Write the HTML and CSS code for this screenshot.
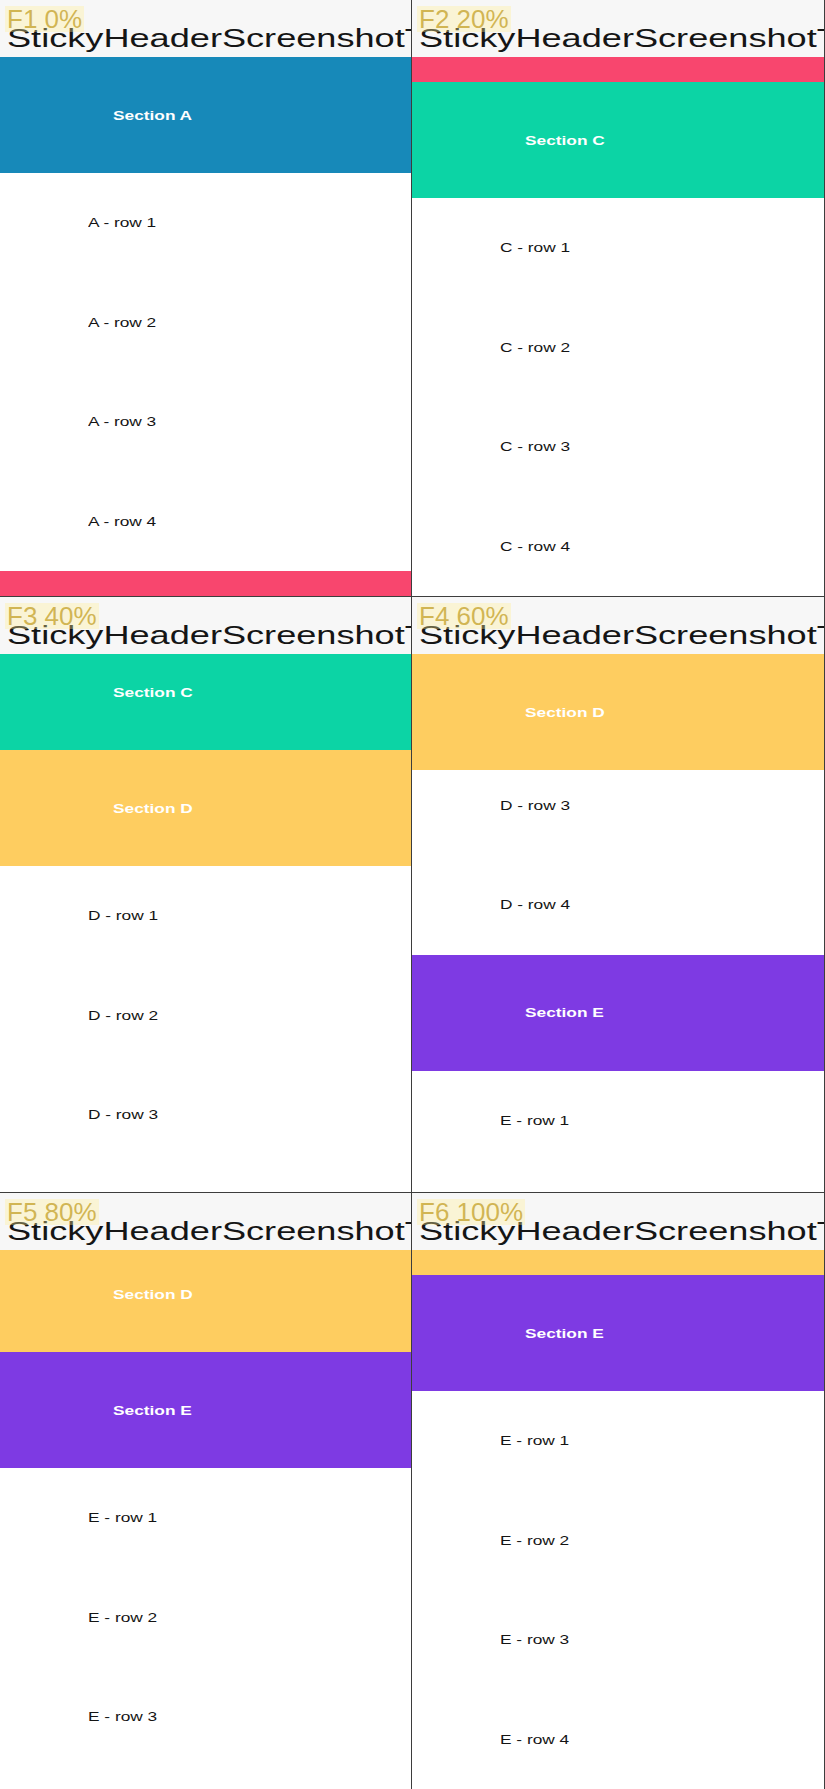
FILE: index.html
```html
<!DOCTYPE html>
<html lang="en">

<head>
  <meta charset="UTF-8">
  <meta name="viewport" content="width=device-width, initial-scale=1.0">
  <title>Sticky Header Screenshot Test</title>
  <link rel="stylesheet" href="styles.css">
</head>

<body>
  <main class="Board">

    <section class="Shot">
      <header class="Shot-bar">
        <span class="Shot-tag">F1 0%</span>
        <h1 class="Shot-title">StickyHeaderScreenshotTest</h1>
      </header>
      <div class="Shot-view">
        <div class="Head Head--a"><span>Section A</span></div>
        <div class="Row"><span>A - row 1</span></div>
        <div class="Row"><span>A - row 2</span></div>
        <div class="Row"><span>A - row 3</span></div>
        <div class="Row"><span>A - row 4</span></div>
        <div class="Head Head--b"><span>Section B</span></div>
      </div>
    </section>

    <section class="Shot">
      <header class="Shot-bar">
        <span class="Shot-tag">F2 20%</span>
        <h1 class="Shot-title">StickyHeaderScreenshotTest</h1>
      </header>
      <div class="Shot-view">
        <div class="Head Head--b is-peek"><span>Section B</span></div>
        <div class="Head Head--c"><span>Section C</span></div>
        <div class="Row"><span>C - row 1</span></div>
        <div class="Row"><span>C - row 2</span></div>
        <div class="Row"><span>C - row 3</span></div>
        <div class="Row"><span>C - row 4</span></div>
      </div>
    </section>

    <section class="Shot">
      <header class="Shot-bar">
        <span class="Shot-tag">F3 40%</span>
        <h1 class="Shot-title">StickyHeaderScreenshotTest</h1>
      </header>
      <div class="Shot-view">
        <div class="Head Head--c is-lifted"><span>Section C</span></div>
        <div class="Head Head--d"><span>Section D</span></div>
        <div class="Row"><span>D - row 1</span></div>
        <div class="Row"><span>D - row 2</span></div>
        <div class="Row"><span>D - row 3</span></div>
        <div class="Row"><span>D - row 4</span></div>
      </div>
    </section>

    <section class="Shot">
      <header class="Shot-bar">
        <span class="Shot-tag">F4 60%</span>
        <h1 class="Shot-title">StickyHeaderScreenshotTest</h1>
      </header>
      <div class="Shot-view">
        <div class="Head Head--d"><span>Section D</span></div>
        <div class="Row is-under"><span>D - row 3</span></div>
        <div class="Row"><span>D - row 4</span></div>
        <div class="Head Head--e"><span>Section E</span></div>
        <div class="Row"><span>E - row 1</span></div>
        <div class="Row"><span>E - row 2</span></div>
      </div>
    </section>

    <section class="Shot">
      <header class="Shot-bar">
        <span class="Shot-tag">F5 80%</span>
        <h1 class="Shot-title">StickyHeaderScreenshotTest</h1>
      </header>
      <div class="Shot-view">
        <div class="Head Head--d is-nudged"><span>Section D</span></div>
        <div class="Head Head--e"><span>Section E</span></div>
        <div class="Row"><span>E - row 1</span></div>
        <div class="Row"><span>E - row 2</span></div>
        <div class="Row"><span>E - row 3</span></div>
        <div class="Row"><span>E - row 4</span></div>
      </div>
    </section>

    <section class="Shot">
      <header class="Shot-bar">
        <span class="Shot-tag">F6 100%</span>
        <h1 class="Shot-title">StickyHeaderScreenshotTest</h1>
      </header>
      <div class="Shot-view">
        <div class="Head Head--d is-peek"><span>Section D</span></div>
        <div class="Head Head--e"><span>Section E</span></div>
        <div class="Row"><span>E - row 1</span></div>
        <div class="Row"><span>E - row 2</span></div>
        <div class="Row"><span>E - row 3</span></div>
        <div class="Row"><span>E - row 4</span></div>
      </div>
    </section>

  </main>
</body>

</html>
```

FILE: styles.css
```css
body {
  margin: 0;
  background: #fff;
  font-family: "Liberation Sans", Arial, Helvetica, sans-serif;
}

* {
  box-sizing: border-box;
}

.Board {
  display: grid;
  grid-template-columns: 411px 412px;
  grid-template-rows: 596px 595px 596px;
  gap: 1px;
  width: 825px;
  height: 1789px;
  background: #3d3d3d;
  border-right: 1px solid #3d3d3d;
}

.Shot {
  position: relative;
  display: flex;
  flex-direction: column;
  overflow: hidden;
  background: #fff;
}

.Shot-bar {
  flex-shrink: 0;
  height: 57px;
  padding: 25px 0 0 7px;
  background: #f7f7f7;
  overflow: hidden;
  white-space: nowrap;
}

.Shot-title {
  display: inline-block;
  margin: 0;
  font-size: 26px;
  font-weight: normal;
  line-height: 26px;
  color: #151515;
  transform: scaleX(1.39);
  transform-origin: left center;
}

/* frame label drawn over the title bar */
.Shot-tag {
  position: absolute;
  top: 6px;
  left: 5px;
  z-index: 2;
  padding: 0 2px;
  font-size: 26px;
  line-height: 26px;
  color: rgba(196, 160, 40, .75);
  background: rgba(255, 238, 150, .35);
}

.Shot-view {
  flex: 1;
  overflow: hidden;
}

.Head {
  display: flex;
  align-items: center;
  height: 116px;
  padding-left: 113px;
  color: #fff;
  font-size: 13px;
  font-weight: bold;
}

.Row {
  display: flex;
  align-items: center;
  height: 99.5px;
  padding-left: 88px;
  color: #141414;
  font-size: 13px;
}

.Head span,
.Row span {
  display: inline-block;
  transform: scaleX(1.33);
  transform-origin: left center;
}

.Head--a { background: #1789b9; }
.Head--b { background: #f8466e; }
.Head--c { background: #0cd4a5; }
.Head--d { background: #fecd60; }
.Head--e { background: #7e3ae3; }

/* header pushed up under the title bar */
.Head.is-peek {
  margin-top: -91px;
}

.Head.is-lifted {
  margin-top: -20px;
}

.Head.is-nudged {
  margin-top: -14px;
}

/* row partly scrolled under the sticky header */
.Row.is-under {
  height: 85px;
  padding-bottom: 14px;
}
```
